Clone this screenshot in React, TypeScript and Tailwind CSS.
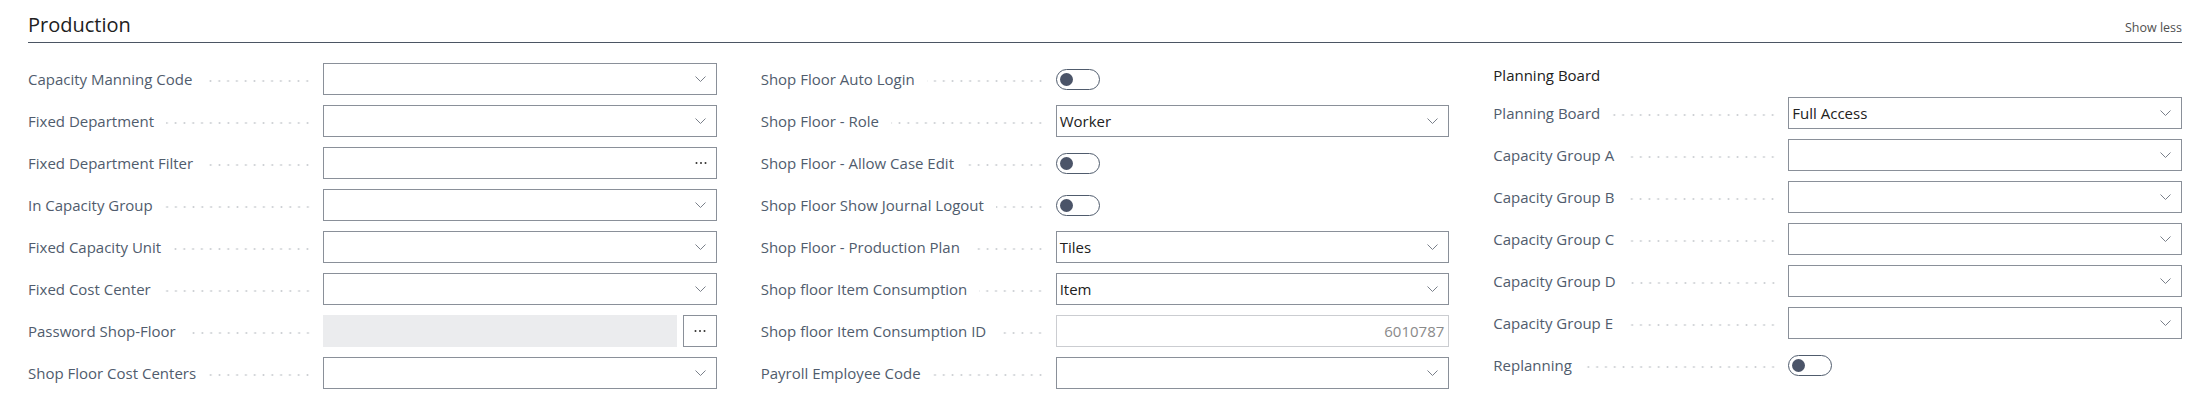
import React from 'react';

type Field =
  | { kind: 'select'; label: string; value?: string }
  | { kind: 'lookup'; label: string }
  | { kind: 'password'; label: string }
  | { kind: 'toggle'; label: string }
  | { kind: 'readonly'; label: string; value: string }
  | { kind: 'group'; label: string };

const font = { fontFamily: '"Open Sans", "Noto Sans", Arial, sans-serif' };

const columns: Field[][] = [
  [
    { kind: 'select', label: 'Capacity Manning Code' },
    { kind: 'select', label: 'Fixed Department' },
    { kind: 'lookup', label: 'Fixed Department Filter' },
    { kind: 'select', label: 'In Capacity Group' },
    { kind: 'select', label: 'Fixed Capacity Unit' },
    { kind: 'select', label: 'Fixed Cost Center' },
    { kind: 'password', label: 'Password Shop-Floor' },
    { kind: 'select', label: 'Shop Floor Cost Centers' },
  ],
  [
    { kind: 'toggle', label: 'Shop Floor Auto Login' },
    { kind: 'select', label: 'Shop Floor - Role', value: 'Worker' },
    { kind: 'toggle', label: 'Shop Floor - Allow Case Edit' },
    { kind: 'toggle', label: 'Shop Floor Show Journal Logout' },
    { kind: 'select', label: 'Shop Floor - Production Plan', value: 'Tiles' },
    { kind: 'select', label: 'Shop floor Item Consumption', value: 'Item' },
    { kind: 'readonly', label: 'Shop floor Item Consumption ID', value: '6010787' },
    { kind: 'select', label: 'Payroll Employee Code' },
  ],
  [
    { kind: 'group', label: 'Planning Board' },
    { kind: 'select', label: 'Planning Board', value: 'Full Access' },
    { kind: 'select', label: 'Capacity Group A' },
    { kind: 'select', label: 'Capacity Group B' },
    { kind: 'select', label: 'Capacity Group C' },
    { kind: 'select', label: 'Capacity Group D' },
    { kind: 'select', label: 'Capacity Group E' },
    { kind: 'toggle', label: 'Replanning' },
  ],
];

function Chevron() {
  return (
    <svg width="11" height="6" viewBox="0 0 11 6" fill="none">
      <path d="M0.5 0.5 L5.5 5.5 L10.5 0.5" stroke="#7a808a" strokeWidth="1" />
    </svg>
  );
}

function Ellipsis() {
  return (
    <svg width="12" height="4" viewBox="0 0 12 4" fill="#323130">
      <circle cx="1.5" cy="2" r="1" />
      <circle cx="6" cy="2" r="1" />
      <circle cx="10.5" cy="2" r="1" />
    </svg>
  );
}

function Control({ field }: { field: Field }) {
  switch (field.kind) {
    case 'select':
      return (
        <div className="flex-1 h-[32px] border border-[#8a9099] bg-white flex items-center justify-between pl-[3px] pr-[10px]">
          <span className="text-[15px] text-[#212121]">{field.value ?? ''}</span>
          <Chevron />
        </div>
      );
    case 'lookup':
      return (
        <div className="flex-1 h-[32px] border border-[#8a9099] bg-white flex items-center justify-end pr-[9px]">
          <Ellipsis />
        </div>
      );
    case 'password':
      return (
        <div className="flex-1 h-[32px] flex gap-[6px]">
          <div className="flex-1 bg-[#ebecee]" />
          <div className="w-[34px] border border-[#8a9099] bg-white flex items-center justify-center">
            <Ellipsis />
          </div>
        </div>
      );
    case 'readonly':
      return (
        <div className="flex-1 h-[32px] border border-[#cbcdd1] bg-white flex items-center justify-end pr-[4px]">
          <span className="text-[15px] text-[#8a8a8a]">{field.value}</span>
        </div>
      );
    case 'toggle':
      return (
        <div className="flex-1 h-[32px] flex items-center">
          <div className="w-[44px] h-[21px] rounded-full border-[1.5px] border-[#505c6d] flex items-center pl-[3px]">
            <div className="w-[13px] h-[13px] rounded-full bg-[#4b5468]" />
          </div>
        </div>
      );
    default:
      return null;
  }
}

function Row({ field }: { field: Field }) {
  if (field.kind === 'group') {
    return (
      <div className="h-[24px] flex items-center pt-[1px]">
        <span className="text-[15px] font-medium text-[#212121]">{field.label}</span>
      </div>
    );
  }
  return (
    <div className="flex h-[32px]">
      <div className="w-[295px] flex items-center pr-[11px]">
        <span className="text-[15px] text-[#505c6d] whitespace-nowrap">{field.label}</span>
        <div className="flex-1 ml-[12px] mt-[3px] h-[4px] bg-[image:radial-gradient(circle,#cdd0d4_0.9px,transparent_1.2px)] bg-[length:8.8px_4px] bg-repeat-x bg-right" />
      </div>
      <Control field={field} />
    </div>
  );
}

export default function App() {
  return (
    <div className="w-[2186px] h-[419px] bg-white pl-[28px] pr-[4px]" style={font}>
      {/* Section header */}
      <div className="flex items-baseline justify-between pt-[11px] pb-[3px] border-b border-[#4b5563]">
        <h2 className="text-[20px] leading-[28px] font-medium text-[#212121]">Production</h2>
        <span className="text-[12.5px] text-[#505050]">Show less</span>
      </div>

      <div className="grid grid-cols-3 gap-x-[44px] mt-[20px]">
        {columns.map((col, i) => (
          <div key={i} className="flex flex-col gap-[10px]">
            {col.map((f, j) => (
              <Row key={j} field={f} />
            ))}
          </div>
        ))}
      </div>
    </div>
  );
}
